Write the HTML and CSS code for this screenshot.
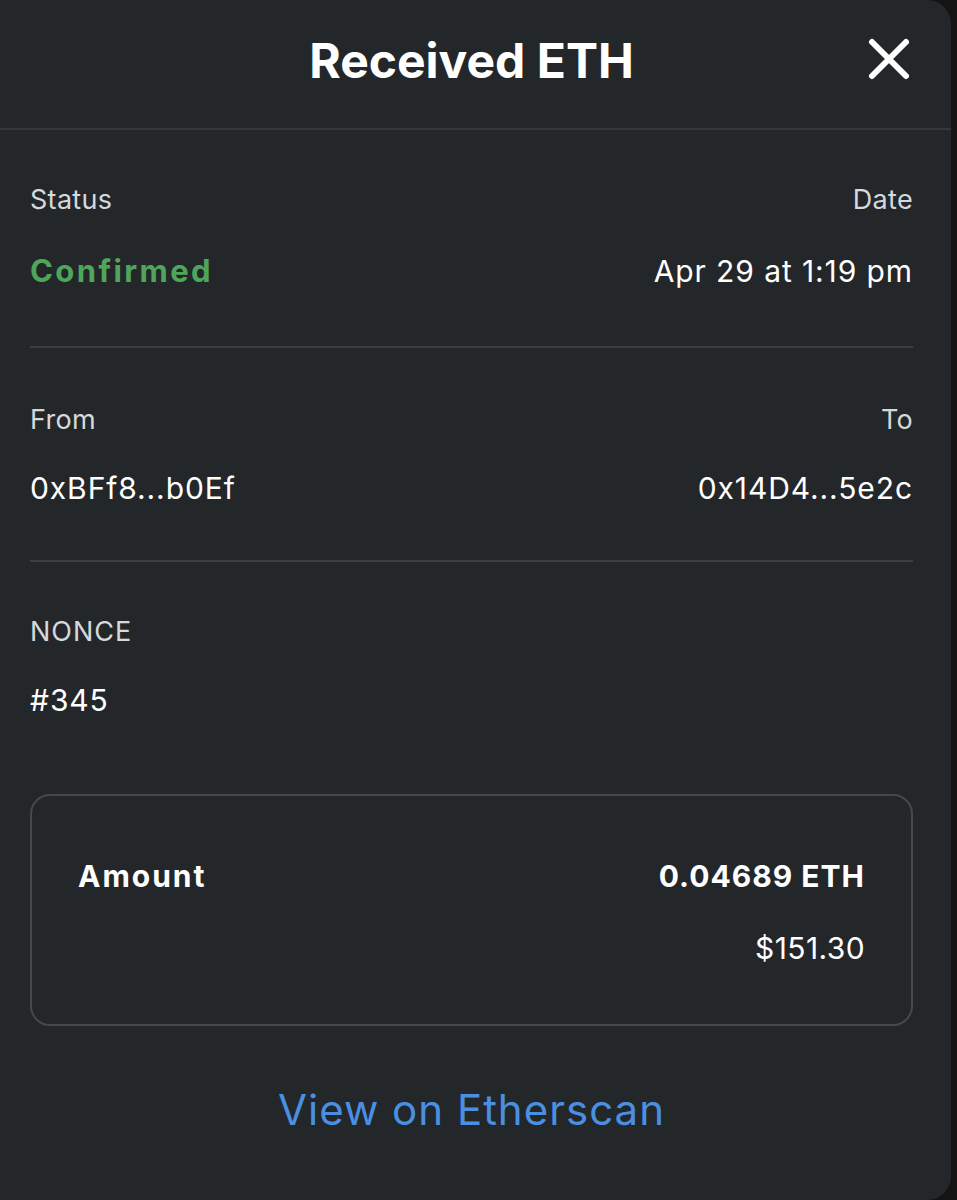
FILE: index.html
```html
<!DOCTYPE html>
<html lang="en">
<head>
    <meta charset="UTF-8">
    <meta name="viewport" content="width=device-width, initial-scale=1.0">
    <title>Received ETH</title>
    <link rel="stylesheet" href="styles.css">
</head>
<body>
    <div class="panel">
        <div class="header">
            <h2>Received ETH</h2>
            <button class="close-btn" aria-label="Close">
                <svg width="44" height="44" viewBox="0 0 44 44">
                    <path d="M5 5 L39 39 M39 5 L5 39" stroke="#fff" stroke-width="6" stroke-linecap="round" fill="none"/>
                </svg>
            </button>
        </div>

        <div class="content">
            <div class="row-section">
                <div class="col">
                    <div class="label">Status</div>
                    <div class="value status-ok">Confirmed</div>
                </div>
                <div class="col right">
                    <div class="label">Date</div>
                    <div class="value">Apr 29 at 1:19 pm</div>
                </div>
            </div>

            <div class="row-section">
                <div class="col">
                    <div class="label">From</div>
                    <div class="value">0xBFf8...b0Ef</div>
                </div>
                <div class="col right">
                    <div class="label">To</div>
                    <div class="value">0x14D4...5e2c</div>
                </div>
            </div>

            <div class="row-section no-border">
                <div class="col">
                    <div class="label upper">NONCE</div>
                    <div class="value">#345</div>
                </div>
            </div>

            <div class="amount-box">
                <div class="amount-row">
                    <span class="bold amount-label">Amount</span>
                    <span class="bold">0.04689 ETH</span>
                </div>
                <div class="amount-row fiat">
                    <span>$151.30</span>
                </div>
            </div>

            <a class="etherscan-link" href="#">View on Etherscan</a>
        </div>
    </div>
</body>
</html>
```

FILE: styles.css
```css
/* Global Styles */
body {
    margin: 0;
    padding: 0;
    background-color: #161314;
    font-family: Inter, "Noto Sans", Arial, sans-serif;
    color: #ffffff;
}

.panel {
    width: 951px;
    height: 1200px;
    background-color: #24272a;
    border-radius: 0 24px 24px 0;
    box-sizing: border-box;
}

/* Header */
.header {
    height: 128px;
    border-bottom: 2px solid #34373b;
    display: flex;
    align-items: center;
    justify-content: center;
    position: relative;
}

.header h2 {
    margin: 0;
    font-size: 48px;
    font-weight: 700;
    margin-left: -8px;
    margin-top: -8px;
}

.close-btn {
    position: absolute;
    right: 40px;
    top: 37px;
    background: none;
    border: none;
    padding: 0;
    cursor: pointer;
}

.close-btn svg {
    display: block;
}

/* Content */
.content {
    padding: 0 38px 0 30px;
}

.row-section {
    display: flex;
    justify-content: space-between;
    padding: 54px 0 58px;
    border-bottom: 2px solid #3b3e43;
}

.row-section + .row-section {
    padding-top: 56px;
    padding-bottom: 55px;
}

.row-section + .row-section .label {
    margin-bottom: 35px;
}

.row-section.no-border {
    border-bottom: none;
    padding-top: 54px;
    padding-bottom: 0;
}

.col.right {
    text-align: right;
}

.label {
    font-size: 27px;
    line-height: 32px;
    color: #d6d9dc;
    margin-bottom: 38px;
    letter-spacing: 0.3px;
}

.label.upper {
    letter-spacing: 1px;
}

.value {
    font-size: 30px;
    line-height: 34px;
    letter-spacing: 0.9px;
}

.status-ok {
    color: #4fa65a;
    font-weight: 700;
    font-size: 31px;
    letter-spacing: 2.4px;
}

/* Amount box */
.amount-box {
    margin-top: 77px;
    border: 2px solid #45484d;
    border-radius: 20px;
    padding: 62px 46px 52px 46px;
    height: 232px;
    box-sizing: border-box;
}

.amount-row {
    display: flex;
    justify-content: space-between;
    font-size: 30px;
    line-height: 36px;
    letter-spacing: 0.4px;
}

.amount-row.fiat {
    justify-content: flex-end;
    margin-top: 36px;
}

.bold {
    font-weight: 700;
    letter-spacing: 1px;
}

.amount-label {
    letter-spacing: 2px;
}

.etherscan-link {
    display: block;
    text-align: center;
    color: #4a90e2;
    text-decoration: none;
    font-size: 42px;
    line-height: 50px;
    letter-spacing: 1px;
    margin-top: 59px;
}
```
